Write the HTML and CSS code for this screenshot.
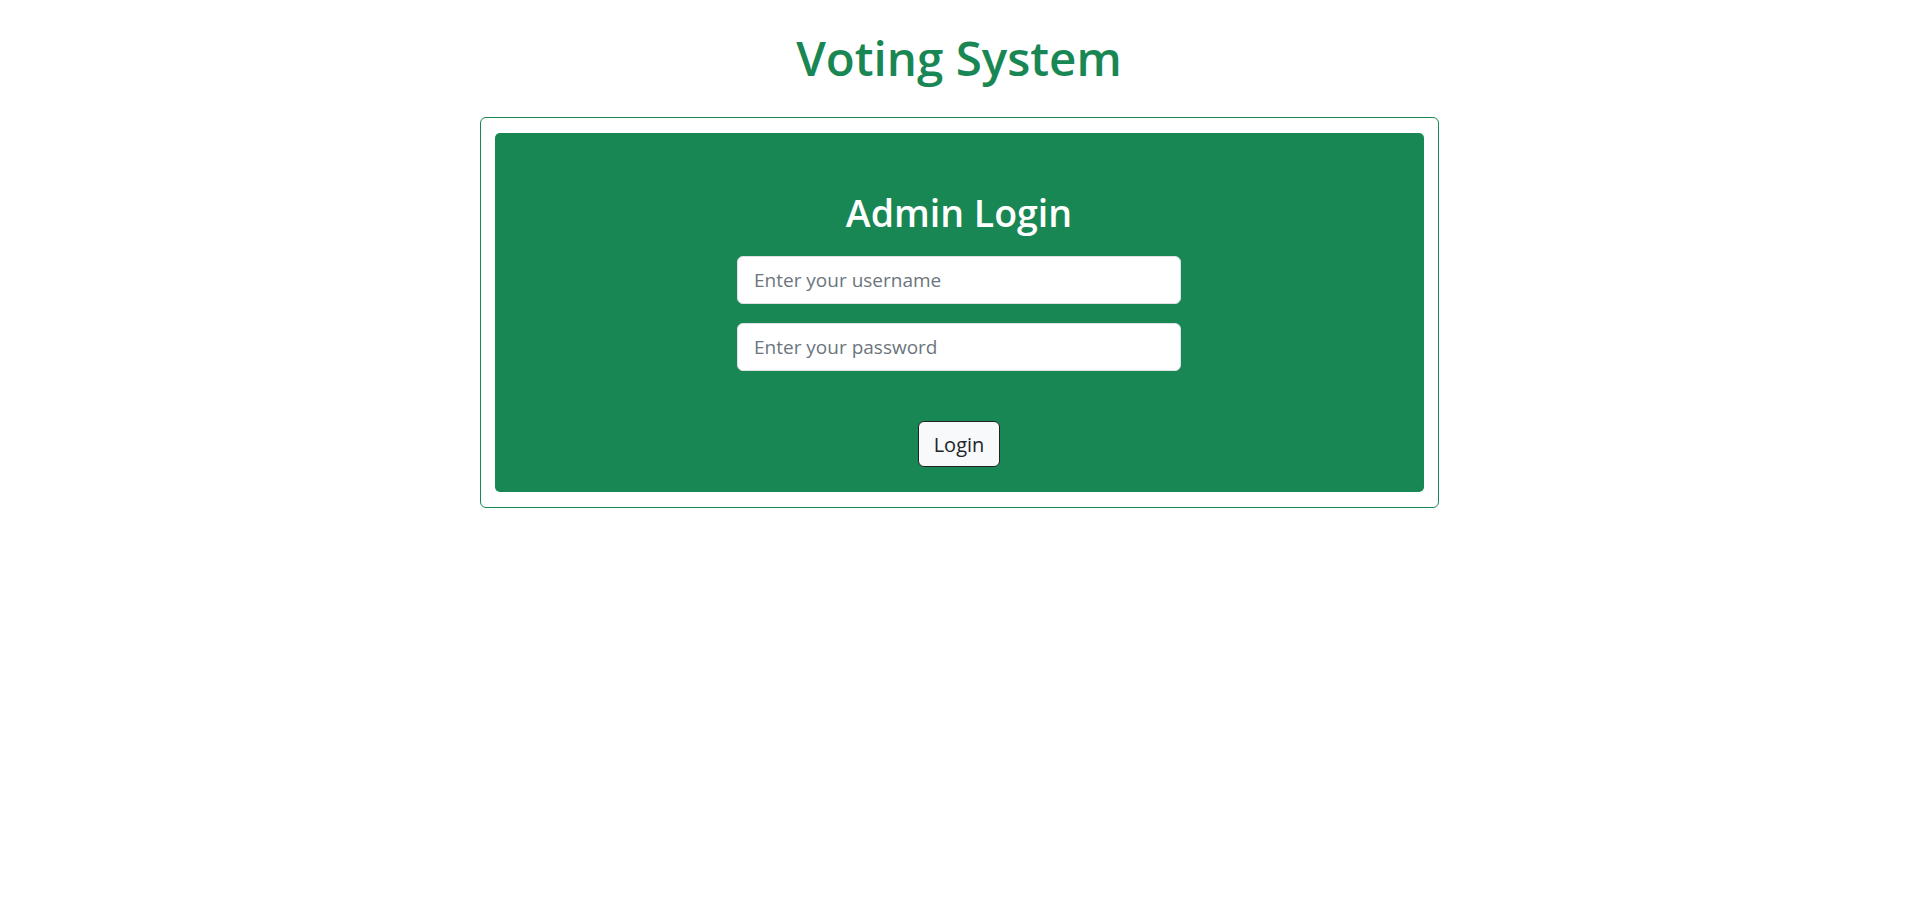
FILE: index.html
```html
<!DOCTYPE html>
<html lang="en">
<head>
<meta charset="utf-8">
<title>Voting System</title>
<link rel="stylesheet" href="styles.css">
</head>
<body>
  <h1 class="site-title">Voting System</h1>
  <div class="login-box">
    <form class="login-panel">
      <h2 class="login-title">Admin Login</h2>
      <input class="field" type="text" placeholder="Enter your username">
      <input class="field" type="password" placeholder="Enter your password">
      <button class="login-btn" type="button">Login</button>
    </form>
  </div>
</body>
</html>
```

FILE: styles.css
```css
* { box-sizing: border-box; }

body {
  margin: 0;
  background: #fff;
  font-family: "Open Sans", "Noto Sans", sans-serif;
  color: #212529;
}

.site-title {
  margin: 28px 0 29px;
  text-align: center;
  font-size: 47.5px;
  line-height: 60px;
  font-weight: 600;
  color: #198754;
}

.login-box {
  width: 959px;
  margin: 0 auto;
  border: 1px solid #198754;
  border-radius: 6px;
  padding: 15px 14px;
}

.login-panel {
  background: #198754;
  border-radius: 5px;
  display: flex;
  flex-direction: column;
  align-items: center;
  padding: 58px 0 25px;
  margin: 0;
}

.login-title {
  margin: 0 0 21px;
  font-size: 37.5px;
  line-height: 44px;
  font-weight: 600;
  color: #fff;
}

.field {
  width: 444px;
  height: 48px;
  padding: 8px 16px;
  font-family: inherit;
  font-size: 19px;
  color: #212529;
  background: #fff;
  border: 1px solid #dee2e6;
  border-radius: 6px;
  margin-bottom: 19px;
  outline: none;
}

.field::placeholder { color: #6c757d; }

.login-btn {
  margin-top: 31px;
  height: 46px;
  padding: 0 15px;
  font-family: inherit;
  font-size: 20px;
  color: #212529;
  background: #f8f9fa;
  border: 1px solid #1f2326;
  border-radius: 6px;
}
```
